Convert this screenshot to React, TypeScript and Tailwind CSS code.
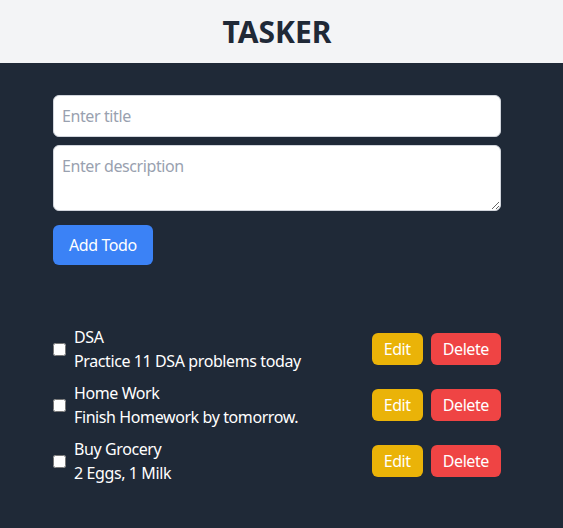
import React from "react";

const todos = [
  { title: "DSA", description: "Practice 11 DSA problems today" },
  { title: "Home Work", description: "Finish Homework by tomorrow." },
  { title: "Buy Grocery", description: "2 Eggs, 1 Milk" },
];

export default function App() {
  return (
    <div
      className="min-h-[528px] bg-[#1f2937] text-white"
      style={{ fontFamily: '"Noto Sans", "Open Sans", sans-serif' }}
    >
      <header className="h-[63px] bg-[#f3f4f6] flex items-center justify-center pr-[9px]">
        <h1 className="text-[30px] font-bold text-[#1f2937]">TASKER</h1>
      </header>
      <main className="w-[448px] ml-[53px] pt-8 tracking-[-0.4px]">
        <div className="flex flex-col gap-2">
          <input
            className="w-full h-[42px] px-2 py-2 text-base leading-6 bg-white text-black border border-gray-300 rounded-md placeholder:text-gray-400 outline-none tracking-[-0.4px]"
            placeholder="Enter title"
          />
          <textarea
            rows={2}
            className="w-full h-[66px] px-2 py-2 text-base leading-6 bg-white text-black border border-gray-300 rounded-md placeholder:text-gray-400 outline-none tracking-[-0.4px]"
            placeholder="Enter description"
          />
        </div>
        <button className="mt-[14px] h-10 px-4 bg-[#3b82f6] text-white text-base rounded-md tracking-[-0.4px]">
          Add Todo
        </button>
        <ul className="mt-[60px] flex flex-col gap-2">
          {todos.map((t) => (
            <li key={t.title} className="h-12 flex items-center justify-between">
              <div className="flex items-center gap-2">
                <input type="checkbox" className="w-[13px] h-[13px]" />
                <div className="flex flex-col leading-6 text-base">
                  <span>{t.title}</span>
                  <span>{t.description}</span>
                </div>
              </div>
              <div className="flex gap-2">
                <button className="h-8 px-3 bg-[#eab308] text-white rounded-md text-base tracking-[-0.4px]">Edit</button>
                <button className="h-8 px-3 bg-[#ef4444] text-white rounded-md text-base tracking-[-0.4px]">Delete</button>
              </div>
            </li>
          ))}
        </ul>
      </main>
    </div>
  );
}
